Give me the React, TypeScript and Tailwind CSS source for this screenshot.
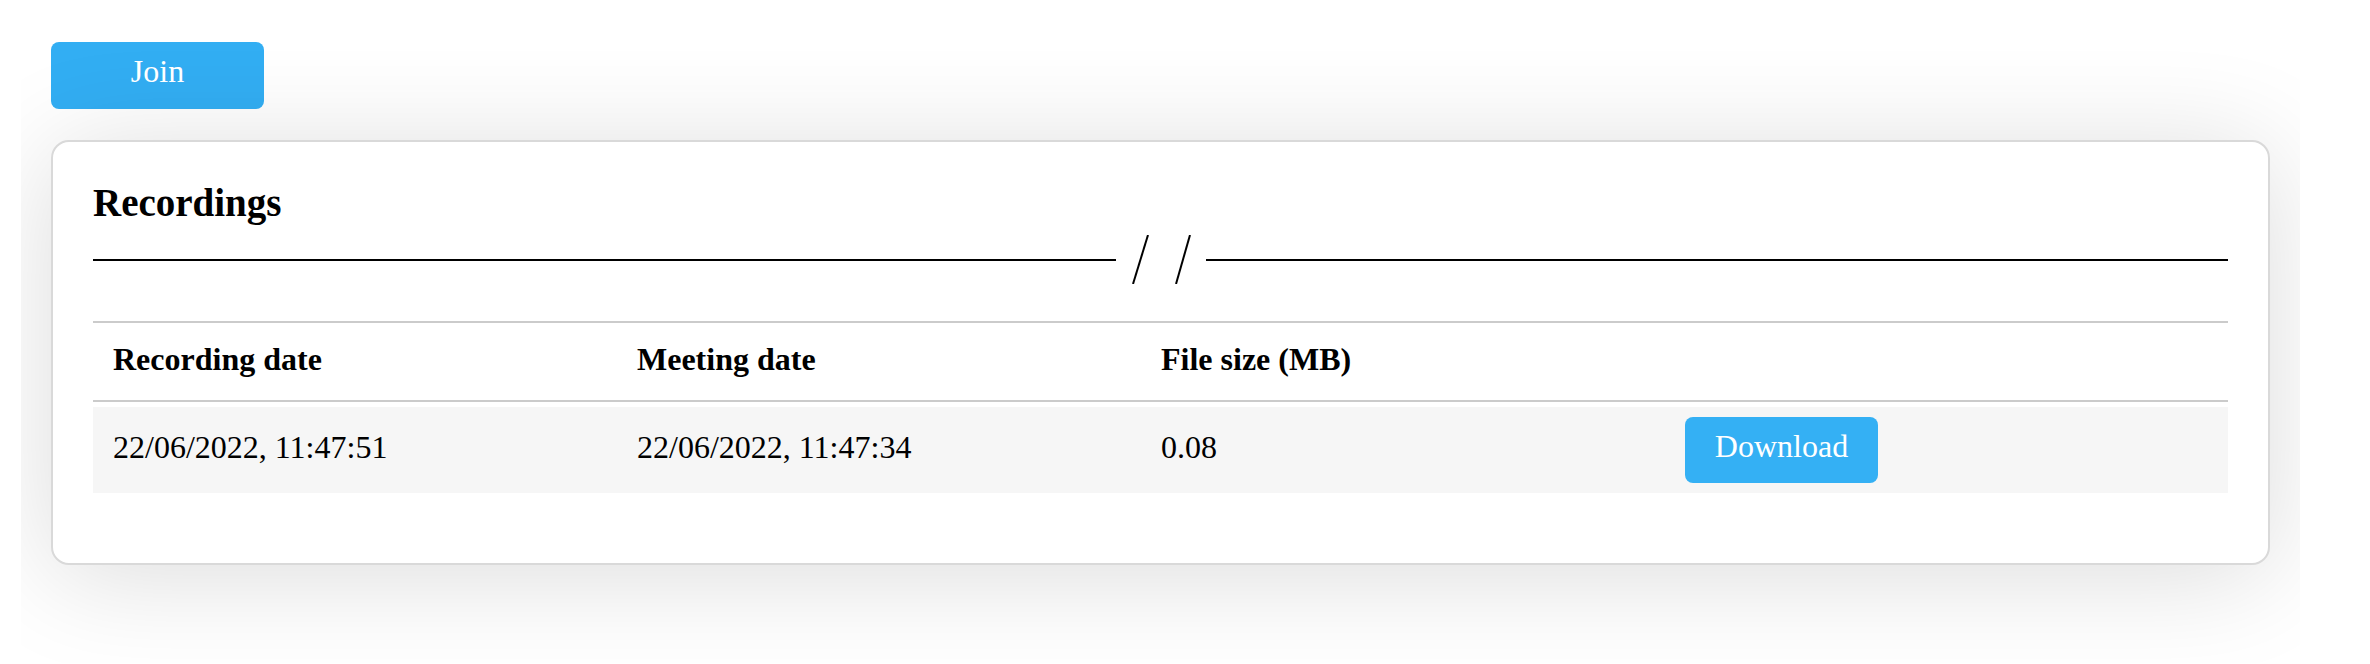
import React from "react";

const rows = [
  {
    recording: "22/06/2022, 11:47:51",
    meeting: "22/06/2022, 11:47:34",
    size: "0.08",
  },
];

export default function App() {
  return (
    <div className="min-h-[664px] bg-white font-['Liberation_Serif',serif] text-black">
      <div className="ml-[21px] w-[2279px] overflow-hidden px-[30px] pt-[42px] pb-[98px]">
        <button className="flex h-[67px] w-[213px] items-center justify-center rounded-[8px] bg-[#32aef3] pb-[8px] text-[32px] leading-[37px] text-white">
          Join
        </button>

        <div className="mt-[31px] rounded-[18px] border-2 border-[#d9d9d9] bg-white px-[40px] pt-[38px] pb-[70px] shadow-[0_10px_110px_rgba(0,0,0,0.14)]">
          <h2 className="h-[45px] text-[39px] font-bold leading-[45px]">Recordings</h2>

          <div className="mt-[10px] flex h-[49px] items-center">
            <div className="h-[2px] flex-1 bg-black" />
            <svg width="90" height="49" viewBox="0 0 90 49" className="shrink-0">
              <line x1="17" y1="49" x2="32" y2="0" stroke="black" strokeWidth="2" />
              <line x1="60" y1="49" x2="74" y2="0" stroke="black" strokeWidth="2" />
            </svg>
            <div className="h-[2px] flex-1 bg-black" />
          </div>

          <div className="mt-[37px]">
            <div className="grid h-[81px] grid-cols-[524px_524px_524px_1fr] border-y-2 border-[#cbcbcb] text-[32px] font-bold leading-[37px]">
              <div className="px-[20px] pt-[18px]">Recording date</div>
              <div className="px-[20px] pt-[18px]">Meeting date</div>
              <div className="px-[20px] pt-[18px]">File size (MB)</div>
              <div className="px-[20px] pt-[18px]" />
            </div>
            {rows.map((r) => (
              <div
                key={r.recording}
                className="mt-[5px] grid h-[86px] grid-cols-[524px_524px_524px_1fr] bg-[#f6f6f6] text-[32px] leading-[37px]"
              >
                <div className="px-[20px] pt-[22px]">{r.recording}</div>
                <div className="px-[20px] pt-[22px]">{r.meeting}</div>
                <div className="px-[20px] pt-[22px]">{r.size}</div>
                <div className="px-[20px] pt-[10px]">
                  <button className="flex h-[66px] w-[193px] items-center justify-center rounded-[8px] bg-[#34b0f4] pb-[7px] text-[32px] leading-[37px] text-white">
                    Download
                  </button>
                </div>
              </div>
            ))}
          </div>
        </div>
      </div>
    </div>
  );
}
